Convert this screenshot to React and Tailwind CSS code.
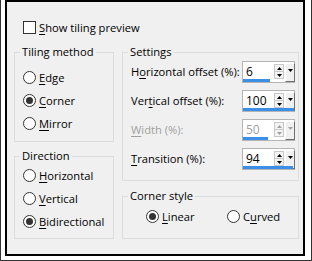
import React from 'react';

const Acc = ({ text, u }) => (
  <span className="whitespace-nowrap">
    {text.slice(0, u)}
    <span className="underline underline-offset-[2px]">{text[u]}</span>
    {text.slice(u + 1)}
  </span>
);

const Radio = ({ checked, label, u }) => (
  <div className="flex items-center gap-[3px] h-[13px]">
    <span className="w-[13px] h-[13px] shrink-0 rounded-full border border-[#333] bg-white flex items-center justify-center">
      {checked && <span className="w-[7px] h-[7px] rounded-full bg-[#333]" />}
    </span>
    <Acc text={label} u={u} />
  </div>
);

const Tri = ({ up, color }) => (
  <svg width="5" height="3" viewBox="0 0 5 3" className="block">
    <path d={up ? 'M2.5 0 L5 3 L0 3 Z' : 'M0 0 L5 0 L2.5 3 Z'} fill={color} />
  </svg>
);

const Spin = ({ value, bar, disabled }) => {
  const c = disabled ? '#a0a0a0' : '#000';
  return (
    <div className="relative shrink-0 w-[53px] h-[22px] bg-white border border-[#b4b4b4] flex items-start">
      <span className={`flex-1 pl-[3px] leading-[20px] text-[12px] ${disabled ? 'text-[#a0a0a0]' : 'text-black'}`}>{value}</span>
      <div className="mt-[2px] w-[10px] h-[15px] border border-[#c8c8c8] bg-[#f4f4f4] flex flex-col">
        <div className="flex-1 flex items-center justify-center border-b border-[#c8c8c8]"><Tri up color={c} /></div>
        <div className="flex-1 flex items-center justify-center"><Tri color={c} /></div>
      </div>
      <div className="mt-[1px] ml-[1px] mr-[-1px] w-[10px] h-[19px] bg-[#f0f0f0] border-t border-l border-t-white border-l-white border-r border-b border-r-[#6e6e6e] border-b-[#6e6e6e] flex justify-center pt-[5px]">
        <Tri color={c} />
      </div>
      <div className="absolute left-0 bottom-0 h-[3px] bg-[#3b8fe6]" style={{ width: bar }} />
    </div>
  );
};

const Group = ({ title, className, children }) => (
  <fieldset className={`border border-[#dcdcdc] p-0 m-0 ${className}`}>
    <legend className="ml-[5px] px-[2px] leading-[16px]">{title}</legend>
    {children}
  </fieldset>
);

const Row = ({ label, u, disabled, children }) => (
  <div className="flex items-center justify-between h-[22px]">
    <span className={disabled ? 'text-[#a0a0a0]' : ''}>
      <Acc text={label} u={u} />
    </span>
    {children}
  </div>
);

export default function App() {
  return (
    <div className="w-[312px] h-[261px] bg-white border-x border-b border-[#333] pl-[4px] pr-[6px] pb-[4px] font-['Open_Sans',sans-serif] text-[11.2px] leading-[16px] text-black">
      <div className="h-full bg-[#f0f0f0] border-2 border-black">
        <div className="ml-[16px] mt-[19px] flex items-center gap-[3px] h-[13px]">
          <span className="w-[13px] h-[13px] border border-[#333] bg-white" />
          <Acc text="Show tiling preview" u={0} />
        </div>

        <div className="flex ml-[7px] mt-[10px] gap-[8px]">
          <div className="w-[100px] flex flex-col gap-[6px]">
            <Group title="Tiling method" className="h-[98px]">
              <div className="pl-[8px] pt-[11px] flex flex-col gap-[10px]">
                <Radio label="Edge" u={0} />
                <Radio label="Corner" u={0} checked />
                <Radio label="Mirror" u={0} />
              </div>
            </Group>
            <Group title="Direction" className="h-[91px]">
              <div className="pl-[8px] pt-[5px] flex flex-col gap-[10px]">
                <Radio label="Horizontal" u={0} />
                <Radio label="Vertical" u={0} />
                <Radio label="Bidirectional" u={0} checked />
              </div>
            </Group>
          </div>

          <div className="w-[177px] flex flex-col gap-[7px]">
            <Group title="Settings" className="h-[137px]">
              <div className="pl-[8px] pr-[3px] pt-[1px] flex flex-col gap-[7px]">
                <Row label="Horizontal offset (%):" u={1}>
                  <Spin value="6" bar={27} />
                </Row>
                <Row label="Vertical offset (%):" u={3}>
                  <Spin value="100" bar={51} />
                </Row>
                <Row label="Width (%):" u={0} disabled>
                  <Spin value="50" bar={25} disabled />
                </Row>
                <Row label="Transition (%):" u={0}>
                  <Spin value="94" bar={50} />
                </Row>
              </div>
            </Group>
            <Group title="Corner style" className="h-[51px]">
              <div className="pl-[23px] pt-[6px] flex">
                <div className="w-[81px]">
                  <Radio label="Linear" u={0} checked />
                </div>
                <Radio label="Curved" u={1} />
              </div>
            </Group>
          </div>
        </div>
      </div>
    </div>
  );
}
